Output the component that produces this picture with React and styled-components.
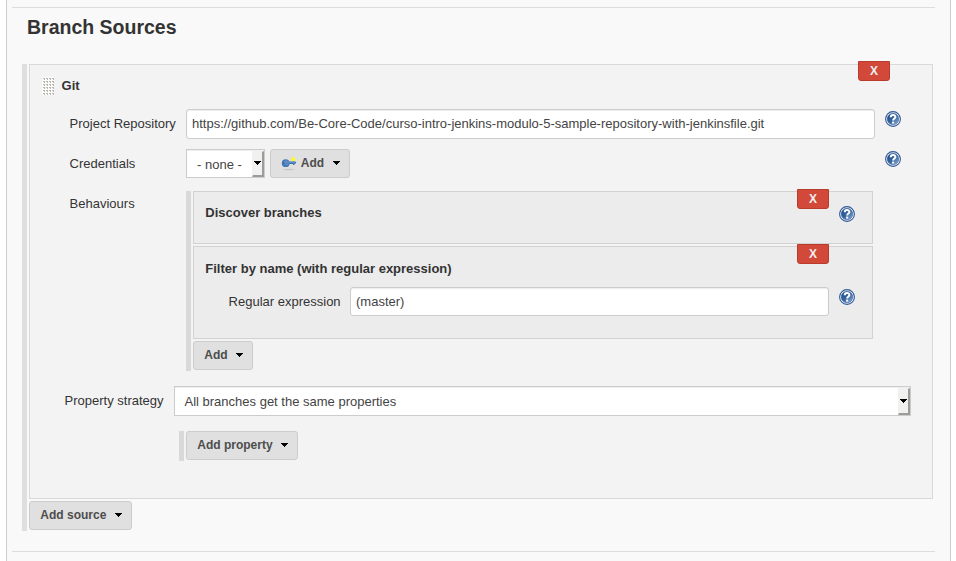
import React from "react";
import styled, { createGlobalStyle } from "styled-components";

const GlobalStyle = createGlobalStyle`
  *, *::before, *::after { box-sizing: border-box; }
  body {
    margin: 0;
    background: #fff;
    color: #333;
    font: 13px/16px "Liberation Sans", Arial, sans-serif;
    overflow: hidden;
  }
  button, input { font: inherit; color: inherit; margin: 0; }
`;

const Page = styled.main`
  width: 945px;
  height: 561px;
  margin-left: 6px;
  padding: 7px 15px 0 5px;
  background: #f9f9f9;
  border: solid #ccc;
  border-width: 0 1px;
`;

const Rule = styled.hr`
  height: 1px;
  margin: 0;
  border: 0;
  background: #ddd;
`;

const Title = styled.h1`
  margin: 8px 0 0 15px;
  height: 48px;
  font-size: 19.5px;
  line-height: 23px;
  font-weight: bold;
`;

const Repeatable = styled.div`
  width: ${(p) => p.$width};
  margin: ${(p) => p.$margin || "0"};
  padding: 0 0 1px 2px;
  border-left: 5px solid ${(p) => p.$bar || "#d9d9d9"};
`;

const SourceCard = styled.section`
  position: relative;
  width: 904px;
  height: 435px;
  margin-bottom: 2px;
  padding: 11px 20px 0 12px;
  background: #f3f3f3;
  border: 1px solid #d9d9d9;
`;

const BehaviourCard = styled.section`
  position: relative;
  width: 680px;
  height: ${(p) => p.$height}px;
  margin-bottom: 2px;
  padding: ${(p) => p.$top}px 17px 0 11px;
  background: #ececec;
  border: 1px solid #d2d2d2;
`;

const CardHead = styled.header`
  display: flex;
  align-items: center;
  gap: 7.6px;
  height: 19px;
  font-weight: bold;
`;

const BehaviourHead = styled.header`
  display: flex;
  justify-content: space-between;
  height: 16px;
  padding-left: 0.3px;
  font-weight: bold;
`;

const DeleteButton = styled.button`
  position: absolute;
  top: ${(p) => p.$top}px;
  right: ${(p) => p.$right}px;
  width: 32px;
  height: 20px;
  padding: 0;
  color: #eee;
  font-size: 12px;
  line-height: 18px;
  font-weight: bold;
  background: #d24939;
  border: 1px solid #b83b2d;
  border-radius: 0 0 3px 3px;
`;

const FormRow = styled.div`
  display: flex;
  align-items: flex-start;
  height: ${(p) => p.$height}px;
  margin-top: ${(p) => p.$top || 0}px;
  margin-left: ${(p) => p.$left || 0}px;
`;

const Label = styled.label`
  flex: none;
  width: ${(p) => p.$width}px;
  padding-top: ${(p) => p.$drop}px;
  padding-left: 0.6px;
  white-space: nowrap;
`;

const TextInput = styled.input`
  flex: none;
  width: ${(p) => p.$width}px;
  height: ${(p) => p.$height}px;
  padding: 0 5px 1px;
  color: #444;
  background: #fff;
  border: 1px solid #ccc;
  border-radius: 3px;
  box-shadow: inset 0 1px 1px rgba(0, 0, 0, 0.075);
`;

const HelpIcon = styled.svg`
  flex: none;
  display: block;
  width: 16px;
  height: 16px;
  margin: ${(p) => p.$margin || "0"};
`;

const SelectBox = styled.div`
  flex: none;
  display: flex;
  justify-content: space-between;
  width: ${(p) => p.$width}px;
  height: ${(p) => p.$height}px;
  padding-left: ${(p) => p.$inset}px;
  color: #444;
  line-height: 30px;
  background: #fff;
  border: 1px solid #ccc;
  box-shadow: inset 0 1px 1px rgba(0, 0, 0, 0.075);
`;

const SelectArrow = styled.span`
  display: flex;
  align-items: flex-start;
  justify-content: center;
  width: 12px;
  margin-top: 1px;
  padding-top: ${(p) => p.$drop}px;
  background: #f1f1f0;
  border: solid #9c9c9c;
  border-color: #f1f1f0 #9c9c9c #9c9c9c #f1f1f0;
  border-width: 1px 2px 2px 1px;
`;

const MenuButton = styled.button`
  flex: none;
  display: flex;
  align-items: center;
  width: ${(p) => p.$width}px;
  height: 29px;
  padding: 0 9px 2px 10.3px;
  color: #4d4d4d;
  font-size: 12px;
  line-height: 16px;
  font-weight: bold;
  white-space: nowrap;
  background: #e0e0e0;
  border: 1px solid #ccc;
  border-radius: 3px;

  & > svg:last-child { margin: 1px 0 0 auto; }
`;

const KeySvg = styled.svg`
  flex: none;
  width: 16px;
  height: 16px;
  margin: 1px 3.5px 0 0;
`;

const CaretSvg = styled.svg`
  flex: none;
  display: block;
  width: 7px;
  height: 4px;
`;

function Caret() {
  return (
    <CaretSvg viewBox="0 0 7 4" shapeRendering="crispEdges" aria-hidden="true">
      <path d="M0 0h7v1h-1v1h-1v1h-1v1h-1v-1h-1v-1h-1v-1h-1z" fill="#000" />
    </CaretSvg>
  );
}

function Help({ margin }) {
  return (
    <HelpIcon $margin={margin} viewBox="0 0 16 16" role="img" aria-label="Help">
      <defs>
        <linearGradient id="helpFill" x1="0" y1="0" x2="1" y2="1">
          <stop offset="0" stopColor="#174684" />
          <stop offset="0.5" stopColor="#37659f" />
          <stop offset="1" stopColor="#8fb0d8" />
        </linearGradient>
      </defs>
      <circle cx="8" cy="8" r="7.4" fill="#fff" stroke="#2c5796" strokeWidth="1.1" />
      <circle cx="8" cy="8" r="5.8" fill="url(#helpFill)" stroke="#2c5796" strokeWidth="0.5" />
      <path d="M5.7 6.3C5.7 3.3 10.4 3.3 10.4 6C10.4 7.6 8.2 7.5 8.2 9.5" fill="none" stroke="#fff" strokeWidth="2" />
      <rect x="7.1" y="10.6" width="2.1" height="2" fill="#fff" />
    </HelpIcon>
  );
}

function KeyIcon() {
  return (
    <KeySvg viewBox="0 0 16 16">
      <ellipse cx="7.8" cy="14.5" rx="5.8" ry="0.7" fill="#c6c6c6" />
      <circle cx="12.3" cy="4.2" r="2.3" fill="#f5ee55" />
      <circle cx="12.3" cy="4.2" r="1.3" fill="#ffff20" />
      <path d="M7 6.5h7.4l0.9 0.9-0.9 1.4h-1v1.2h-1.4v-0.9H7z" fill="#3c70b0" />
      <circle cx="4.7" cy="8.2" r="3.9" fill="#4377b5" />
      <circle cx="5.2" cy="7.8" r="2.5" fill="#5b8ac4" />
      <circle cx="2.9" cy="8.3" r="0.7" fill="#2f5c98" />
      <path d="M7 7.3h7" stroke="#6e9acb" strokeWidth="0.8" />
    </KeySvg>
  );
}

function Grip() {
  return (
    <svg width="12" height="18" shapeRendering="crispEdges" aria-hidden="true">
      <defs>
        <pattern id="gripDots" width="3" height="3" patternUnits="userSpaceOnUse">
          <rect width="3" height="3" fill="#fbfbf9" />
          <rect x="1" y="1" width="2" height="1" fill="#b9b7b0" />
          <rect x="2" y="1" width="1" height="2" fill="#b9b7b0" />
        </pattern>
      </defs>
      <rect width="12" height="18" fill="url(#gripDots)" />
    </svg>
  );
}

function Select({ width, height, inset, caretDrop, children }) {
  return (
    <SelectBox $width={width} $height={height} $inset={inset}>
      <span>{children}</span>
      <SelectArrow $drop={caretDrop}><Caret /></SelectArrow>
    </SelectBox>
  );
}

const ButtonGap = styled.div`
  width: 5px;
`;

const CredentialsHelp = styled.div`
  margin-left: auto;
`;

export default function App() {
  return (
    <>
      <GlobalStyle />
      <Page>
        <Rule />
        <Title>Branch Sources</Title>
        <Repeatable $width="911px" $margin="0 0 20px 10px" $bar="#dfdfdf">
          <SourceCard>
            <DeleteButton $top={-4} $right={42}>X</DeleteButton>
            <CardHead><Grip />Git</CardHead>

            <FormRow $height={40} $top={14} $left={27}>
              <Label $width={117} $drop={7}>Project Repository</Label>
              <TextInput
                $width={689}
                $height={30}
                defaultValue="https://github.com/Be-Core-Code/curso-intro-jenkins-modulo-5-sample-repository-with-jenkinsfile.git"
              />
              <Help margin="2px 0 0 10px" />
            </FormRow>

            <FormRow $height={42} $left={27}>
              <Label $width={117} $drop={7}>Credentials</Label>
              <Select width={79} height={29} inset={10} caretDrop={9}>- none -</Select>
              <ButtonGap />
              <MenuButton $width={80}><KeyIcon />Add<Caret /></MenuButton>
              <CredentialsHelp><Help margin="2px 11px 0 0" /></CredentialsHelp>
            </FormRow>

            <FormRow $height={195} $left={27}>
              <Label $width={117} $drop={5}>Behaviours</Label>
              <Repeatable $width="687px">
                <BehaviourCard $height={53} $top={13}>
                  <DeleteButton $top={-3} $right={43}>X</DeleteButton>
                  <BehaviourHead>Discover branches<Help margin="1px 0 0 0" /></BehaviourHead>
                </BehaviourCard>
                <BehaviourCard $height={93} $top={14}>
                  <DeleteButton $top={-3} $right={43}>X</DeleteButton>
                  <BehaviourHead>Filter by name (with regular expression)</BehaviourHead>
                  <FormRow $height={29} $top={10} $left={23}>
                    <Label $width={122} $drop={7}>Regular expression</Label>
                    <TextInput $width={479} $height={29} defaultValue="(master)" />
                    <Help margin="2px 0 0 10px" />
                  </FormRow>
                </BehaviourCard>
                <MenuButton $width={60}>Add<Caret /></MenuButton>
              </Repeatable>
            </FormRow>

            <FormRow $height={45} $left={22}>
              <Label $width={110} $drop={7}>Property strategy</Label>
              <Select width={737} height={30} inset={9.5} caretDrop={10}>All branches get the same properties</Select>
            </FormRow>
            <Repeatable $width="119px" $margin="0 0 0 137px">
              <MenuButton $width={112}>Add property<Caret /></MenuButton>
            </Repeatable>
          </SourceCard>
          <MenuButton $width={103}>Add source<Caret /></MenuButton>
        </Repeatable>
        <Rule />
      </Page>
    </>
  );
}
